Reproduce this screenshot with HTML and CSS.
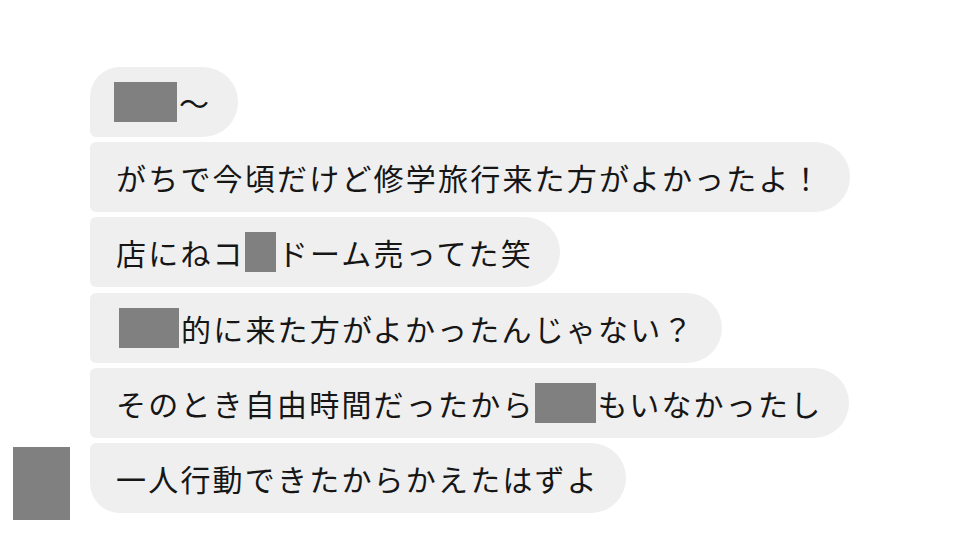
FILE: index.html
```html
<!DOCTYPE html>
<html lang="ja">
<head>
<meta charset="utf-8">
<link rel="stylesheet" href="styles.css">
</head>
<body>
<div class="thread">
  <div class="avatar"></div>
  <div class="bubbles">
    <div class="bubble first"><span class="mask m1"></span><span class="txt">～</span></div>
    <div class="bubble"><span class="txt">がちで今頃だけど修学旅行来た方がよかったよ！</span></div>
    <div class="bubble"><span class="txt">店にねコ</span><span class="mask m3"></span><span class="txt">ドーム売ってた笑</span></div>
    <div class="bubble"><span class="mask m4"></span><span class="txt">的に来た方がよかったんじゃない？</span></div>
    <div class="bubble"><span class="txt">そのとき自由時間だったから</span><span class="mask m5"></span><span class="txt">もいなかったし</span></div>
    <div class="bubble last"><span class="txt">一人行動できたからかえたはずよ</span></div>
  </div>
</div>
</body>
</html>
```

FILE: styles.css
```css
html, body {
  margin: 0;
  padding: 0;
  background: #ffffff;
}

body {
  font-family: "Noto Sans CJK JP", "Noto Sans", sans-serif;
  color: #161616;
}

.thread {
  display: flex;
  align-items: flex-end;
  gap: 20px;
  padding: 67px 0 0 13px;
}

.avatar {
  width: 57px;
  height: 73px;
  background: #808080;
  flex: none;
}

.bubbles {
  display: flex;
  flex-direction: column;
  align-items: flex-start;
  gap: 5.2px;
  margin-bottom: 7px;
}

.bubble {
  height: 70px;
  box-sizing: border-box;
  display: flex;
  align-items: center;
  padding: 0 27px 0 26px;
  background: #efefef;
  border-radius: 6px 35px 35px 6px;
  font-size: 30px;
  letter-spacing: 2.2px;
  white-space: nowrap;
}

.bubble.first {
  border-radius: 30px 35px 35px 6px;
  padding-left: 24px;
}

.bubble.last {
  border-radius: 6px 35px 35px 30px;
}

.txt {
  line-height: 1;
}

.mask {
  display: inline-block;
  height: 40px;
  background: #808080;
  flex: none;
}

.m1 { width: 63px; margin-right: 2px; }
.m3 { width: 31px; margin: 0 2px 0 0; }
.m4 { width: 60px; margin-left: 3px; margin-right: 2px; }
.m5 { width: 61px; margin-right: 2px; }
```
